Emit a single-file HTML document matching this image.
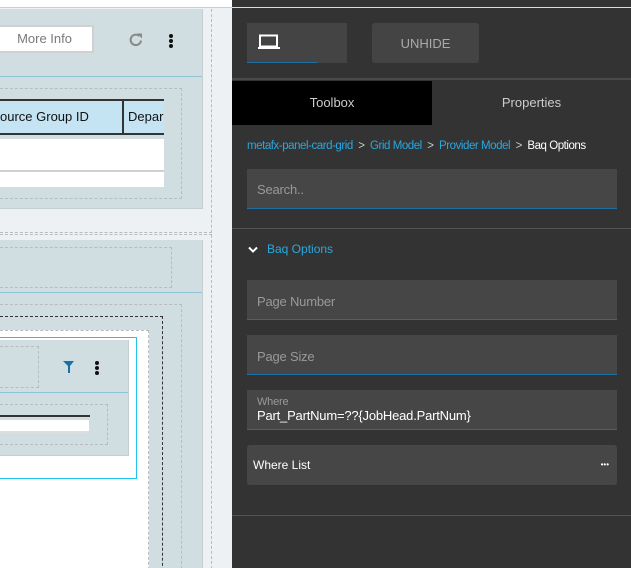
<!DOCTYPE html>
<html style="width:631px;height:568px;overflow:hidden"><head><style>
*{margin:0;padding:0;box-sizing:border-box}
body{width:631px;height:568px;overflow:hidden;position:relative;font-family:"Liberation Sans",sans-serif;background:#eef1f3}
.a{position:absolute}
.dash{position:absolute;border:1px dashed #b8bcbe}
.f{position:absolute;left:247px;width:370px;height:40px;background:#464646;border-bottom:1px solid #1f6fa3;color:#999;font-size:13px;letter-spacing:-0.2px}
#clip{position:absolute;left:0;top:0;width:232px;height:568px;overflow:hidden}
</style></head><body>
<div id="clip">
<div class="a" style="left:0;top:0;width:232px;height:8px;background:#fff;border-bottom:1px solid #ccc"></div>
<div class="a" style="left:0;top:9px;width:203px;height:200px;background:#d1dee1;border-right:1px solid #c5cfd2;border-bottom:1px solid #c5cfd2"></div>
<div class="a" style="left:-5px;top:25px;width:99px;height:28px;background:#fff;border:2px solid #d0d0d0;color:#7a7a7a;font-size:13px;line-height:24px;text-align:right;padding-right:20px">More Info</div>
<svg class="a" style="left:127px;top:31px" width="18" height="18" viewBox="0 0 18 18"><path d="M14 9.5A5.2 5.2 0 1 1 12.3 5" fill="none" stroke="#888" stroke-width="2"/><path d="M10 2.5h5v5z" fill="#888"/></svg>
<div class="a" style="left:169px;top:34px;width:4px;height:4px;background:#111;border-radius:2px;box-shadow:0 5px 0 #111,0 10px 0 #111"></div>
<div class="a" style="left:0;top:76px;width:202px;height:1px;background:#8fc3d6"></div>
<div class="dash" style="left:-5px;top:88px;width:187px;height:111px"></div>
<div class="a" style="left:0;top:99px;width:164px;height:36px;background:#c4e3f3;border-top:2px solid #333;border-bottom:2px solid #333;font-size:13px;line-height:32px;color:#111"><span class="a" style="left:0">ource Group ID</span><span class="a" style="left:122px;top:0;width:2px;height:32px;background:#333"></span><span class="a" style="left:128px">Depar</span></div>
<div class="a" style="left:0;top:139px;width:164px;height:48px;background:#fff"></div>
<div class="a" style="left:0;top:170px;width:164px;height:2px;background:#d0d0d0"></div>
<div class="a" style="left:211px;top:9px;width:0;height:560px;border-left:1px dashed #b8bcbe"></div>
<div class="a" style="left:0;top:232px;width:212px;height:3px;border-top:1px dashed #b8bcbe;border-bottom:1px dashed #b8bcbe"></div>
<div class="a" style="left:0;top:240px;width:203px;height:330px;background:#d1dee1;border-right:1px solid #c5cfd2"></div>
<div class="dash" style="left:-5px;top:247px;width:177px;height:41px"></div>
<div class="a" style="left:0;top:292px;width:202px;height:1px;background:#8fc3d6"></div>
<div class="dash" style="left:-5px;top:304px;width:187px;height:280px"></div>
<div class="a" style="left:-5px;top:316px;width:168px;height:270px;border:1px dashed #333"></div>
<div class="a" style="left:-5px;top:330px;width:154px;height:260px;background:#fff;border:1px dashed #bbb"></div>
<div class="a" style="left:-5px;top:337px;width:142px;height:142px;border:1px solid #1cc4ee"></div>
<div class="a" style="left:0;top:340px;width:129px;height:116px;background:#d1dee1;border-right:1px solid #c5cfd2;border-bottom:1px solid #c5cfd2"></div>
<div class="dash" style="left:-5px;top:346px;width:44px;height:42px"></div>
<svg class="a" style="left:63px;top:361px" width="12" height="13" viewBox="0 0 12 13"><path d="M0 0h11L7 5v7H5V5z" fill="#1a6fa3"/></svg>
<div class="a" style="left:95px;top:361px;width:4px;height:4px;background:#111;border-radius:2px;box-shadow:0 5px 0 #111,0 10px 0 #111"></div>
<div class="a" style="left:0;top:392px;width:128px;height:1px;background:#8fc3d6"></div>
<div class="dash" style="left:-5px;top:404px;width:113px;height:41px"></div>
<div class="a" style="left:0;top:415px;width:90px;height:2px;background:#333"></div>
<div class="a" style="left:0;top:420px;width:89px;height:13px;background:#fff;border-bottom:2px solid #ddd"></div>
</div>
<!-- right -->
<div class="a" style="left:232px;top:0;width:399px;height:568px;background:#333;overflow:hidden">
<div class="a" style="left:0;top:7px;width:399px;height:1px;background:#ddd"></div>
<div class="a" style="left:15px;top:23px;width:100px;height:40px;background:#444"></div>
<div class="a" style="left:15px;top:62px;width:70px;height:1px;background:#1f6fa3"></div>
<svg class="a" style="left:25px;top:34px" width="24" height="16" viewBox="0 0 24 16"><rect x="3" y="1.5" width="17" height="11" fill="none" stroke="#fff" stroke-width="2"/><rect x="1" y="13" width="22" height="2" fill="#fff"/></svg>
<div class="a" style="left:140px;top:23px;width:107px;height:40px;background:#444;border-radius:3px;color:#aaa;font-size:13px;line-height:42px;text-align:center">UNHIDE</div>
<div class="a" style="left:0;top:78px;width:399px;height:2px;background:#4a4a4a"></div>
<div class="a" style="left:0;top:81px;width:200px;height:44px;background:#000;color:#ccc;font-size:13px;line-height:44px;text-align:center">Toolbox</div>
<div class="a" style="left:200px;top:81px;width:199px;height:44px;color:#ccc;font-size:13px;line-height:44px;text-align:center">Properties</div>
<div class="a" style="left:15px;top:140px;font-size:11.5px;letter-spacing:-0.45px;color:#29a8e0;white-space:nowrap">metafx-panel-card-grid <span style="color:#ccc">&nbsp;&gt;&nbsp;</span> Grid Model <span style="color:#ccc">&nbsp;&gt;&nbsp;</span> Provider Model <span style="color:#ccc">&nbsp;&gt;&nbsp;</span> <span style="color:#fff">Baq Options</span></div>
<div class="a" style="left:0;top:228px;width:399px;height:1px;background:#555"></div>
<svg class="a" style="left:16px;top:246px" width="10" height="8" viewBox="0 0 10 8"><path d="M1 1.5l4 4 4-4" fill="none" stroke="#fff" stroke-width="2"/></svg>
<div class="a" style="left:35px;top:242px;font-size:12px;color:#29a8e0">Baq Options</div>
<div class="a" style="left:0;top:515px;width:399px;height:1px;background:#555"></div>
</div>
<div class="f" style="top:169px;padding:13px 10px">Search..</div>
<div class="f" style="top:280px;padding:14px 10px">Page Number</div>
<div class="f" style="top:335px;padding:14px 10px">Page Size</div>
<div class="f" style="top:390px;padding:6px 10px"><div style="font-size:11px;color:#999">Where</div><div style="color:#fff;font-size:13px">Part_PartNum=??{JobHead.PartNum}</div></div>
<div class="a" style="left:247px;top:445px;width:370px;height:40px;background:#464646;border-radius:3px;color:#fff;font-size:12px;line-height:40px;padding-left:6px">Where List<span style="position:absolute;right:8px;top:0;font-size:8px">•••</span></div>
</body></html>
